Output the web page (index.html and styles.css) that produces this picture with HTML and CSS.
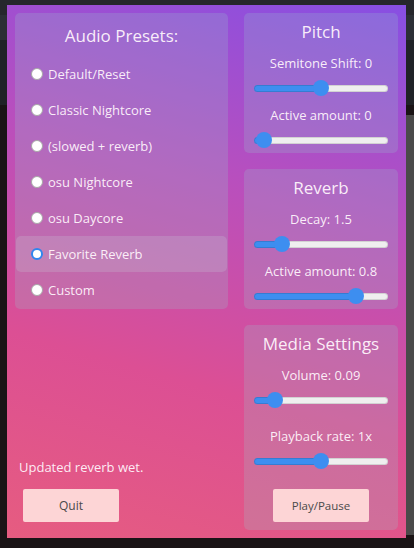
FILE: index.html
```html
<!DOCTYPE html>
<html>
<head>
<meta charset="utf-8">
<link rel="stylesheet" href="styles.css">
</head>
<body>
<div class="popup">
  <div class="col col-left">
    <section class="panel presets">
      <h3 class="title">Audio Presets:</h3>
      <label class="preset"><input type="radio" name="preset" class="radio"><span>Default/Reset</span></label>
      <label class="preset"><input type="radio" name="preset" class="radio"><span>Classic Nightcore</span></label>
      <label class="preset"><input type="radio" name="preset" class="radio"><span>(slowed + reverb)</span></label>
      <label class="preset"><input type="radio" name="preset" class="radio"><span>osu Nightcore</span></label>
      <label class="preset"><input type="radio" name="preset" class="radio"><span>osu Daycore</span></label>
      <label class="preset active"><input type="radio" name="preset" class="radio" checked><span>Favorite Reverb</span></label>
      <label class="preset"><input type="radio" name="preset" class="radio"><span>Custom</span></label>
    </section>
    <div class="footer">
      <p class="status">Updated reverb wet.</p>
      <button class="btn">Quit</button>
    </div>
  </div>
  <div class="col col-right">
    <section class="panel control">
      <h3 class="title">Pitch</h3>
      <p class="label">Semitone Shift: 0</p>
      <input type="range" class="slider" min="0" max="100" value="50" style="--p:0.5">
      <p class="label">Active amount: 0</p>
      <input type="range" class="slider" min="0" max="100" value="2" style="--p:0.02">
    </section>
    <section class="panel control">
      <h3 class="title">Reverb</h3>
      <p class="label">Decay: 1.5</p>
      <input type="range" class="slider" min="0" max="100" value="17" style="--p:0.17">
      <p class="label">Active amount: 0.8</p>
      <input type="range" class="slider" min="0" max="100" value="80" style="--p:0.8">
    </section>
    <section class="panel control media">
      <h3 class="title">Media Settings</h3>
      <p class="label">Volume: 0.09</p>
      <input type="range" class="slider" min="0" max="100" value="11" style="--p:0.11">
      <p class="label spaced">Playback rate: 1x</p>
      <input type="range" class="slider" min="0" max="100" value="50" style="--p:0.5">
      <button class="btn btn-play">Play/Pause</button>
    </section>
  </div>
</div>
</body>
</html>
```

FILE: styles.css
```css
html, body {
  margin: 0;
  padding: 0;
}

body {
  width: 414px;
  height: 548px;
  overflow: hidden;
  font-family: "Open Sans", "Noto Sans", sans-serif;
  background:
    linear-gradient(#4a4a4a, #4a4a4a) no-repeat 406px 115px / 8px 420px,
    linear-gradient(to bottom, #26272c 0, #26272c 15px, #2c2f36 15px, #2c2f36 40px, #202227 40px, #202227 105px, #1a1416 105px);
}

.popup {
  box-sizing: border-box;
  width: 399px;
  height: 533px;
  margin: 5px 0 0 7px;
  padding: 8px;
  display: flex;
  gap: 16px;
  background: linear-gradient(196deg, #874fe3 0%, #b94fbd 35%, #dc4f94 68%, #e65c80 100%);
  color: rgba(255, 246, 252, 0.94);
}

.col {
  display: flex;
  flex-direction: column;
}

.col-left {
  width: 213px;
}

.col-right {
  width: 154px;
  gap: 16px;
}

.panel {
  background: rgba(150, 205, 205, 0.22);
  border-radius: 5px;
}

.title {
  margin: 0;
  font-size: 17px;
  font-weight: 400;
  line-height: 24px;
  text-align: center;
}

.presets {
  padding: 11px 1px 1px;
}

.presets .title {
  margin-bottom: 8px;
}

.preset {
  display: flex;
  align-items: center;
  height: 36px;
  padding-left: 15px;
  border-radius: 5px;
  font-size: 13px;
  line-height: 18px;
}

.preset.active {
  background: rgba(200, 215, 220, 0.22);
}

.radio {
  -webkit-appearance: none;
  appearance: none;
  box-sizing: border-box;
  width: 12px;
  height: 12px;
  margin: 0 5px 0 0;
  border: 1px solid #a8a8a8;
  border-radius: 50%;
  background: #fff;
}

.radio:checked {
  border: 2px solid #2f86ee;
  background: #fff;
}

.footer {
  margin-top: auto;
  padding-bottom: 8px;
}

.status {
  margin: 0 0 13px 4px;
  font-size: 13px;
  line-height: 18px;
}

.btn {
  display: inline-block;
  width: 96px;
  height: 33px;
  margin-left: 8px;
  padding: 0;
  border: none;
  border-radius: 2px;
  background: #fdd5d6;
  color: #4a4a4a;
  font-family: "Open Sans", "Noto Sans", sans-serif;
  font-size: 12px;
}

.control {
  padding: 7px 10px 5px;
  text-align: center;
}

.media {
  padding-bottom: 8px;
}

.label {
  margin: 10px 0 0;
  font-size: 13px;
  line-height: 18px;
}

.label.spaced {
  margin-top: 19px;
}

.btn-play {
  margin: 20px 0 0;
  font-size: 11.5px;
}

.slider {
  -webkit-appearance: none;
  appearance: none;
  display: block;
  width: 134px;
  height: 16px;
  margin: 8px 0 0;
  padding: 0;
  background: transparent;
}

.slider::-webkit-slider-runnable-track {
  height: 7px;
  border-radius: 4px;
  background: linear-gradient(to right, #3d8ef0 calc(8px + var(--p) * 118px), #efefef calc(8px + var(--p) * 118px));
  box-shadow: inset 0 0 0 1px rgba(0, 0, 0, 0.12);
}

.slider::-webkit-slider-thumb {
  -webkit-appearance: none;
  appearance: none;
  width: 16px;
  height: 16px;
  margin-top: -4.5px;
  border: none;
  border-radius: 50%;
  background: #3d8ef0;
}
```
